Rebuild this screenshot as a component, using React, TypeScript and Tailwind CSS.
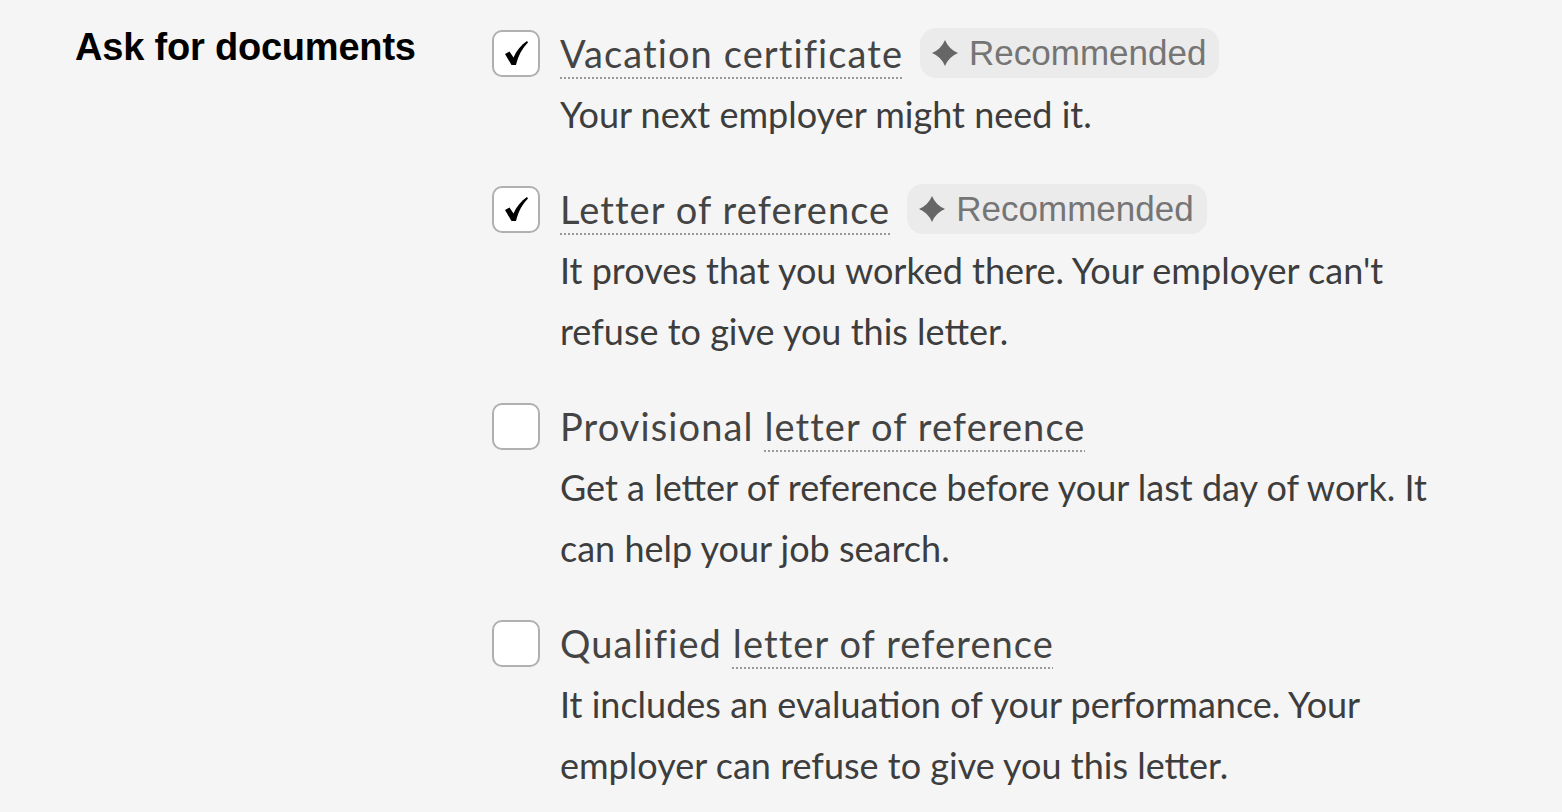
import React from "react";

interface Doc {
  id: string;
  prefix?: string;
  term: string;
  description: string;
  checked: boolean;
  recommended?: boolean;
}

const docs: Doc[] = [
  {
    id: "vacation",
    term: "Vacation certificate",
    description: "Your next employer might need it.",
    checked: true,
    recommended: true,
  },
  {
    id: "reference",
    term: "Letter of reference",
    description: "It proves that you worked there. Your employer can't refuse to give you this letter.",
    checked: true,
    recommended: true,
  },
  {
    id: "provisional",
    prefix: "Provisional ",
    term: "letter of reference",
    description: "Get a letter of reference before your last day of work. It can help your job search.",
    checked: false,
  },
  {
    id: "qualified",
    prefix: "Qualified ",
    term: "letter of reference",
    description: "It includes an evaluation of your performance. Your employer can refuse to give you this letter.",
    checked: false,
  },
];

function Sparkle() {
  return (
    <svg width="26" height="26" viewBox="0 0 24 24" className="shrink-0">
      <path d="M12 0 Q15.5 8.5 24 12 Q15.5 15.5 12 24 Q8.5 15.5 0 12 Q8.5 8.5 12 0 Z" fill="#666666" />
    </svg>
  );
}

function Check() {
  return (
    <svg width="23" height="24" viewBox="0 0 23 24">
      <path d="M0 13 L4.5 10.5 L8.5 16.5 C11.5 9.5 16 4 22 0 L23 1.5 C17.5 7 13.5 14 11 24 L6.5 24 Z" fill="#000000" />
    </svg>
  );
}

function Checkbox({ checked }: { checked: boolean }) {
  return (
    <div className="w-[48px] h-[47px] shrink-0 rounded-[10px] border-2 border-[#b0b0b0] bg-white flex items-center justify-center">
      {checked && <Check />}
    </div>
  );
}

export default function App() {
  return (
    <div className="min-h-screen w-full bg-[#f5f5f5] flex pl-[75px] pt-[22px]">
      <div className="w-[417px] shrink-0">
        <h2 className="font-['Liberation_Sans',Arial,sans-serif] font-bold text-[38px] leading-[50px] text-black tracking-[-0.2px]">
          Ask for documents
        </h2>
      </div>

      <div className="flex flex-col gap-[33px] font-['Lato',sans-serif]">
        {docs.map((doc) => (
          <div key={doc.id} className="flex gap-[20px]">
            <div className="h-[62px] flex items-center">
              <Checkbox checked={doc.checked} />
            </div>
            <div>
              <div className="flex items-center h-[62px]">
                <span className="text-[38px] text-[#444444] tracking-[1.1px]">
                  {doc.prefix}
                  <span className="underline decoration-dotted decoration-[#9a9a9a] decoration-2 underline-offset-[10px]">
                    {doc.term}
                  </span>
                </span>
                {doc.recommended && (
                  <span className="ml-[17px] h-[50px] pl-[12px] pr-[13px] rounded-[16px] bg-[#ebebeb] flex items-center gap-[11px] font-['Liberation_Sans',Arial,sans-serif] text-[35px] text-[#757575]">
                    <Sparkle />
                    Recommended
                  </span>
                )}
              </div>
              <p className="max-w-[890px] text-[36px] leading-[61px] text-[#3d3d3d]">
                {doc.description}
              </p>
            </div>
          </div>
        ))}
      </div>
    </div>
  );
}
